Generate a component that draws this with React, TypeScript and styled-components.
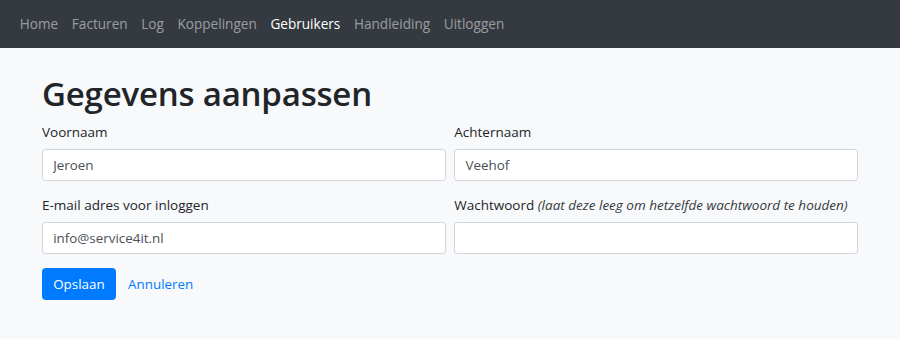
import styled, { createGlobalStyle } from "styled-components";

const GlobalStyle = createGlobalStyle`
  html, body {
    margin: 0;
    padding: 0;
    background-color: #f8f9fa;
    font-family: "Open Sans", "Noto Sans", sans-serif;
    font-size: 13.6px;
    color: #212529;
  }
  * {
    box-sizing: border-box;
  }
`;

const Navbar = styled.nav`
  height: 48px;
  background-color: #343a40;
  display: flex;
  align-items: center;
  padding: 0 13px;
`;
const NavLink = styled.a<{ $active?: boolean }>`
  padding: 0 6.8px;
  font-size: 13.6px;
  line-height: 20px;
  color: ${(p) => (p.$active ? "#fff" : "rgba(255, 255, 255, 0.5)")};
  text-decoration: none;
  cursor: pointer;
`;
const Container = styled.main`
  width: 816px;
  margin: 0 auto;
  padding-top: 26px;
`;
const Title = styled.h1`
  margin: 0 0 6.8px;
  font-size: 33px;
  font-weight: 600;
  line-height: 40.8px;
  letter-spacing: -0.2px;
`;
const Row = styled.div`
  display: grid;
  grid-template-columns: 1fr 1fr;
  column-gap: 8.5px;
`;
const Group = styled.div`
  margin-bottom: 13.6px;
  display: flex;
  flex-direction: column;
`;
const Label = styled.label`
  font-size: 13.5px;
  line-height: 20.4px;
  margin-bottom: 6.8px;
  & i {
    color: #343a40;
  }
`;
const Input = styled.input`
  height: 32.3px;
  padding: 5px 10.2px;
  font-family: inherit;
  font-size: 13.4px;
  color: #495057;
  background-color: #fff;
  border: 1px solid #ced4da;
  border-radius: 3.4px;
  outline: none;
`;
const Actions = styled.div`
  display: flex;
  align-items: center;
`;
const Button = styled.button<{ $link?: boolean }>`
  height: 32.3px;
  padding: 0 10.2px;
  font-family: inherit;
  font-size: 13.4px;
  border-radius: 3.4px;
  border: 1px solid ${(p) => (p.$link ? "transparent" : "#007bff")};
  background-color: ${(p) => (p.$link ? "transparent" : "#007bff")};
  color: ${(p) => (p.$link ? "#007bff" : "#fff")};
  margin-left: ${(p) => (p.$link ? "1px" : "0")};
  cursor: pointer;
`;

const links = ["Home", "Facturen", "Log", "Koppelingen", "Gebruikers", "Handleiding", "Uitloggen"];

const App = () => {
  return (
    <>
      <GlobalStyle />
      <Navbar>
        {links.map((l) => (
          <NavLink key={l} $active={l === "Gebruikers"}>
            {l}
          </NavLink>
        ))}
      </Navbar>
      <Container>
        <Title>Gegevens aanpassen</Title>
        <form>
          <Row>
            <Group>
              <Label>Voornaam</Label>
              <Input defaultValue="Jeroen" />
            </Group>
            <Group>
              <Label>Achternaam</Label>
              <Input defaultValue="Veehof" />
            </Group>
          </Row>
          <Row>
            <Group>
              <Label>E-mail adres voor inloggen</Label>
              <Input defaultValue="info@service4it.nl" />
            </Group>
            <Group>
              <Label>
                Wachtwoord <i>(laat deze leeg om hetzelfde wachtwoord te houden)</i>
              </Label>
              <Input type="password" />
            </Group>
          </Row>
          <Actions>
            <Button type="submit">Opslaan</Button>
            <Button type="button" $link>
              Annuleren
            </Button>
          </Actions>
        </form>
      </Container>
    </>
  );
};

export default App;
